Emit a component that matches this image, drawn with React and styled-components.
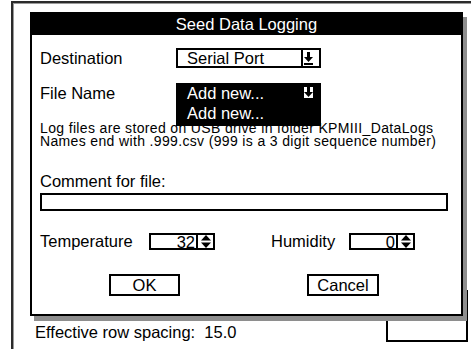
import React from "react";
import styled, { createGlobalStyle } from "styled-components";

const GlobalStyle = createGlobalStyle`
	html, body {
		margin: 0;
		padding: 0;
		background: #fff;
	}
	body {
		font-family: "Liberation Sans", Arial, Helvetica, sans-serif;
		color: #000;
	}
`;

const font = `"Liberation Sans", Arial, Helvetica, sans-serif`;

const Screen = styled.div`
	position: relative;
	width: 471px;
	height: 349px;
	overflow: hidden;
	background: #fff;
`;

const Frame = styled.div`
	box-sizing: border-box;
	margin: 1px 0 0 11px;
	height: 348px;
	border-top: 2px solid #2b2b2b;
	border-left: 2px solid #2b2b2b;
	box-shadow: inset 1px 1px 0 #9a9a9a;
	display: flex;
	flex-direction: column;
	justify-content: flex-end;
	padding: 0 3px 7px 22px;
`;

const StatusRow = styled.div`
	display: flex;
	align-items: flex-end;
	justify-content: space-between;
`;

const StatusText = styled.div`
	font-family: ${font};
	font-size: 16.5px;
	line-height: 19px;
	white-space: pre;
`;

const HiddenPanel = styled.div`
	box-sizing: border-box;
	width: 82px;
	height: 52px;
	border: 2px solid #000;
`;

const Dialog = styled.div`
	position: absolute;
	left: 30px;
	top: 12px;
	width: 433px;
	height: 304px;
	box-sizing: border-box;
	border: 2px solid #000;
	background: #fff;
	box-shadow: 4px 5px 0 #8e8e8e;
	display: flex;
	flex-direction: column;
`;

const TitleBar = styled.div`
	height: 21px;
	background: #000;
	color: #fff;
	font-family: ${font};
	font-size: 16.5px;
	line-height: 21px;
	text-align: center;
`;

const Body = styled.div`
	padding: 13px 13px 0 8px;
	display: flex;
	flex-direction: column;
`;

const FieldRow = styled.div`
	display: grid;
	grid-template-columns: 136px auto;
	align-items: center;
	height: ${(p) => p.$h}px;
	margin-top: ${(p) => p.$mt || 0}px;
`;

const Label = styled.div`
	font-family: ${font};
	font-size: 16.5px;
	line-height: 19px;
	white-space: nowrap;
`;

const SelectWrap = styled.div`
	position: relative;
	width: 145px;
	height: 100%;
`;

const Select = styled.div`
	box-sizing: border-box;
	display: flex;
	align-items: center;
	width: 100%;
	height: 100%;
	border: 2px solid #000;
	background: ${(p) => (p.$dark ? "#000" : "#fff")};
	color: ${(p) => (p.$dark ? "#fff" : "#000")};
`;

const SelectValue = styled.div`
	flex: 1;
	padding-left: 9px;
	font-family: ${font};
	font-size: 16.5px;
	line-height: 16px;
	white-space: nowrap;
`;

const ArrowBox = styled.div`
	align-self: stretch;
	width: ${(p) => (p.$dark ? 9 : 15)}px;
	margin-right: ${(p) => (p.$dark ? 6 : 0)}px;
	border-left: ${(p) => (p.$dark ? "none" : "2px solid #000")};
	display: flex;
	align-items: center;
	justify-content: ${(p) => (p.$dark ? "center" : "flex-start")};
	padding-left: ${(p) => (p.$dark ? 0 : 1)}px;
	svg {
		display: block;
		background: ${(p) => (p.$dark ? "#fff" : "transparent")};
	}
`;

const PopupList = styled.div`
	position: absolute;
	left: 0;
	top: 100%;
	width: 100%;
	height: 23px;
	background: #000;
	color: #fff;
	font-family: ${font};
	font-size: 16.5px;
	line-height: 21px;
	padding-left: 11px;
	box-sizing: border-box;
	z-index: 2;
`;

const InfoText = styled.div`
	margin-top: 19px;
	font-family: ${font};
	font-size: 14px;
	line-height: 13px;
	letter-spacing: 0.35px;
	white-space: nowrap;
`;

const CommentLabel = styled(Label)`
	margin-top: 24px;
`;

const TextInput = styled.div`
	box-sizing: border-box;
	margin-top: 2px;
	width: 408px;
	height: 18px;
	border: 2px solid #000;
`;

const NumberRow = styled.div`
	display: flex;
	align-items: center;
	height: 17px;
	margin-top: 22px;
`;

const NumberLabel = styled(Label)`
	width: ${(p) => p.$w}px;
	margin-left: ${(p) => p.$ml || 0}px;
	line-height: 17px;
`;

const SpinBox = styled.div`
	box-sizing: border-box;
	display: flex;
	width: 66px;
	height: 17px;
	border: 2px solid #000;
`;

const SpinValue = styled.div`
	flex: 1;
	text-align: right;
	padding-right: 1px;
	font-family: ${font};
	font-size: 16.5px;
	line-height: 14px;
`;

const SpinArrows = styled.div`
	width: 15px;
	border-left: 2px solid #000;
	display: flex;
	align-items: center;
	justify-content: center;
	svg {
		display: block;
	}
`;

const ButtonRow = styled.div`
	display: flex;
	justify-content: center;
	gap: 127px;
	margin-top: 24px;
`;

const Button = styled.div`
	box-sizing: border-box;
	width: ${(p) => p.$w}px;
	height: 22px;
	border: 2px solid #000;
	font-family: ${font};
	font-size: 16.5px;
	line-height: 18px;
	text-align: center;
`;

// down arrow resting on a bar, as drawn on the combo buttons
const DropArrow = () => (
	<svg width="9" height="13" viewBox="0 0 9 13">
		<rect x="3" y="0" width="3" height="6" fill="#000" />
		<polygon points="0,5 9,5 4.5,10" fill="#000" />
		<rect x="0" y="11" width="9" height="2" fill="#000" />
	</svg>
);

const SpinIcon = () => (
	<svg width="10" height="13" viewBox="0 0 10 13">
		<polygon points="0,5.5 5,0 10,5.5" fill="#000" />
		<polygon points="0,7.5 10,7.5 5,13" fill="#000" />
	</svg>
);

const App = () => {
	return (
		<>
			<GlobalStyle />
			<Screen>
				<Frame>
					<StatusRow>
						<StatusText>{"Effective row spacing:  15.0"}</StatusText>
						<HiddenPanel />
					</StatusRow>
				</Frame>
				<Dialog>
					<TitleBar>Seed Data Logging</TitleBar>
					<Body>
						<FieldRow $h={19}>
							<Label>Destination</Label>
							<SelectWrap>
								<Select>
									<SelectValue>Serial Port</SelectValue>
									<ArrowBox>
										<DropArrow />
									</ArrowBox>
								</Select>
							</SelectWrap>
						</FieldRow>
						<FieldRow $h={20} $mt={16}>
							<Label>File Name</Label>
							<SelectWrap>
								<Select $dark>
									<SelectValue>Add new...</SelectValue>
									<ArrowBox $dark>
										<DropArrow />
									</ArrowBox>
								</Select>
								<PopupList>Add new...</PopupList>
							</SelectWrap>
						</FieldRow>
						<InfoText>
							Log files are stored on USB drive in folder KPMIII_DataLogs
							<br />
							Names end with .999.csv (999 is a 3 digit sequence number)
						</InfoText>
						<CommentLabel>Comment for file:</CommentLabel>
						<TextInput />
						<NumberRow>
							<NumberLabel $w={109}>Temperature</NumberLabel>
							<SpinBox>
								<SpinValue>32</SpinValue>
								<SpinArrows>
									<SpinIcon />
								</SpinArrows>
							</SpinBox>
							<NumberLabel $w={78} $ml={56}>
								Humidity
							</NumberLabel>
							<SpinBox>
								<SpinValue>0</SpinValue>
								<SpinArrows>
									<SpinIcon />
								</SpinArrows>
							</SpinBox>
						</NumberRow>
						<ButtonRow>
							<Button $w={71}>OK</Button>
							<Button $w={72}>Cancel</Button>
						</ButtonRow>
					</Body>
				</Dialog>
			</Screen>
		</>
	);
};

export default App;
